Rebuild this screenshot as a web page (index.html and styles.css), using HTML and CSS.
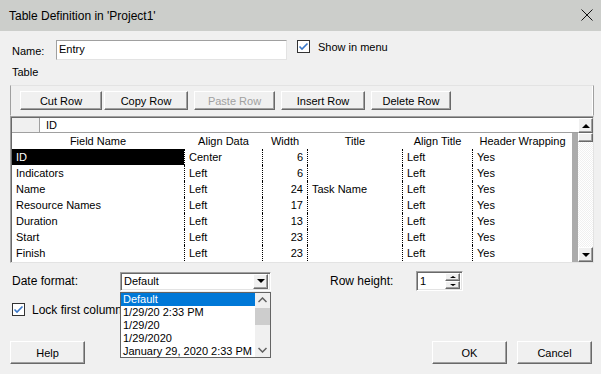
FILE: index.html
```html
<!DOCTYPE html>
<html>
<head>
<meta charset="utf-8">
<link rel="stylesheet" href="styles.css">
</head>
<body>
<div class="window">
  <div class="titlebar">
    <span class="title">Table Definition in 'Project1'</span>
    <svg class="close" width="12" height="12" viewBox="0 0 12 12"><path d="M0.5 0.5 L11.5 11.5 M11.5 0.5 L0.5 11.5" stroke="#111" stroke-width="1" fill="none"/></svg>
  </div>
  <div class="content">
    <div class="name-row">
      <span class="name-label">Name:</span>
      <div class="textbox">Entry</div>
      <div class="check-group show-menu">
        <span class="checkbox"><svg width="11" height="11" viewBox="0 0 11 11"><path d="M1.5 5.5 L4 8 L9.5 2.5" stroke="#3a78c9" stroke-width="1.6" fill="none"/></svg></span>
        <span>Show in menu</span>
      </div>
    </div>
    <div class="section-label">Table</div>
    <div class="panel">
      <button class="btn b-cut">Cut Row</button>
      <button class="btn b-copy">Copy Row</button>
      <button class="btn b-paste disabled">Paste Row</button>
      <button class="btn b-insert">Insert Row</button>
      <button class="btn b-delete">Delete Row</button>
    </div>
    <div class="grid">
      <div class="grid-main">
        <div class="editbar"><div class="corner"></div><div class="editval">ID</div></div>
        <div class="rows">
          <div class="row head">
            <div class="c c1">Field Name</div><div class="c c2">Align Data</div><div class="c c3">Width</div><div class="c c4">Title</div><div class="c c5">Align Title</div><div class="c c6">Header Wrapping</div>
          </div>
          <div class="row">
            <div class="c c1 sel"><span>ID</span></div><div class="c c2">Center</div><div class="c c3">6</div><div class="c c4"></div><div class="c c5">Left</div><div class="c c6">Yes</div>
          </div>
          <div class="row">
            <div class="c c1">Indicators</div><div class="c c2">Left</div><div class="c c3">6</div><div class="c c4"></div><div class="c c5">Left</div><div class="c c6">Yes</div>
          </div>
          <div class="row">
            <div class="c c1">Name</div><div class="c c2">Left</div><div class="c c3">24</div><div class="c c4">Task Name</div><div class="c c5">Left</div><div class="c c6">Yes</div>
          </div>
          <div class="row">
            <div class="c c1">Resource Names</div><div class="c c2">Left</div><div class="c c3">17</div><div class="c c4"></div><div class="c c5">Left</div><div class="c c6">Yes</div>
          </div>
          <div class="row">
            <div class="c c1">Duration</div><div class="c c2">Left</div><div class="c c3">13</div><div class="c c4"></div><div class="c c5">Left</div><div class="c c6">Yes</div>
          </div>
          <div class="row">
            <div class="c c1">Start</div><div class="c c2">Left</div><div class="c c3">23</div><div class="c c4"></div><div class="c c5">Left</div><div class="c c6">Yes</div>
          </div>
          <div class="row">
            <div class="c c1">Finish</div><div class="c c2">Left</div><div class="c c3">23</div><div class="c c4"></div><div class="c c5">Left</div><div class="c c6">Yes</div>
          </div>
        </div>
      </div>
      <div class="vscroll">
        <div class="sbtn"><span class="tri-up"></span></div>
        <div class="thumb"></div>
        <div class="track"></div>
        <div class="sbtn"><span class="tri-down"></span></div>
      </div>
    </div>
    <div class="opt-row">
      <span class="date-label">Date format:</span>
      <div class="combo">
        <span class="combo-val">Default</span>
        <div class="combo-btn"><span class="tri-down"></span></div>
      </div>
      <span class="rh-label">Row height:</span>
      <div class="spin">
        <span class="spin-val">1</span>
        <div class="spin-btns">
          <div class="spin-btn"><span class="tri-up small"></span></div>
          <div class="spin-btn"><span class="tri-down small"></span></div>
        </div>
      </div>
    </div>
    <div class="lock-row">
      <span class="checkbox"><svg width="11" height="11" viewBox="0 0 11 11"><path d="M1.5 5.5 L4 8 L9.5 2.5" stroke="#3a78c9" stroke-width="1.6" fill="none"/></svg></span>
      <span class="lock-label">Lock first column</span>
    </div>
    <div class="footer">
      <button class="btn fbtn">Help</button>
      <span class="spacer"></span>
      <button class="btn fbtn">OK</button>
      <button class="btn fbtn">Cancel</button>
    </div>
    <div class="dropdown">
      <div class="items">
        <div class="item hl">Default</div>
        <div class="item">1/29/20 2:33 PM</div>
        <div class="item">1/29/20</div>
        <div class="item">1/29/2020</div>
        <div class="item">January 29, 2020 2:33 PM</div>
      </div>
      <div class="lscroll">
        <svg class="chev" width="9" height="6" viewBox="0 0 9 6"><path d="M0.5 5 L4.5 1 L8.5 5" stroke="#606060" stroke-width="1.5" fill="none"/></svg>
        <div class="lthumb"></div>
        <span class="lfill"></span>
        <svg class="chev" width="9" height="6" viewBox="0 0 9 6"><path d="M0.5 1 L4.5 5 L8.5 1" stroke="#606060" stroke-width="1.5" fill="none"/></svg>
      </div>
    </div>
  </div>
</div>
</body>
</html>
```
FILE: styles.css
```css
* { box-sizing: border-box; }
html, body { margin: 0; padding: 0; }
body {
  width: 601px;
  height: 374px;
  overflow: hidden;
  font-family: "Liberation Sans", Arial, sans-serif;
  font-size: 11px;
  color: #000;
  background: #f0f0f0;
}
.window { width: 601px; height: 374px; background: #f0f0f0; }
.titlebar {
  height: 31px;
  background: #cccecb;
  display: flex;
  align-items: center;
  padding-left: 9px;
  padding-right: 8px;
  justify-content: space-between;
}
.title { font-size: 12px; color: #000; }
.close { margin-top: -1px; }
.content { position: relative; padding-top: 9px; }

.name-row {
  display: flex;
  align-items: flex-start;
  height: 20px;
}
.name-label { margin-left: 12px; width: 44px; line-height: 20px; padding-top: 1px; }
.textbox {
  width: 231px;
  height: 20px;
  background: #fff;
  border: 1px solid;
  border-color: #a0a0a0 #e3e3e3 #e3e3e3 #a0a0a0;
  padding-left: 2px;
  line-height: 17px;
}
.check-group { display: flex; align-items: center; height: 13px; }
.show-menu { margin-left: 10px; }
.checkbox {
  width: 13px;
  height: 13px;
  border: 1px solid #333;
  background: #fff;
  display: inline-flex;
  align-items: center;
  justify-content: center;
  flex: none;
}
.show-menu .checkbox { margin-right: 8px; }
.section-label { margin-left: 12px; margin-top: 6px; line-height: 13px; height: 13px; }

.panel {
  margin-left: 10px;
  margin-top: 6px;
  width: 584px;
  height: 31px;
  border: 1px solid;
  border-color: #e3e3e3 #a0a0a0 transparent #a0a0a0;
  box-shadow: inset -1px 0 #fff;
  display: flex;
  align-items: flex-start;
  padding-top: 5px;
  padding-left: 9px;
}
.btn {
  font-family: "Liberation Sans", Arial, sans-serif;
  font-size: 11px;
  color: #000;
  background: #f0f0f0;
  border: 1px solid;
  border-color: #fff #696969 #696969 #fff;
  box-shadow: inset -1px -1px #a0a0a0;
  padding: 0;
  margin: 0;
  height: 19px;
}
.btn.disabled { color: #a0a0a0; }
.b-cut { width: 82px; }
.b-copy { width: 84px; margin-left: 2px; }
.b-paste { width: 81px; margin-left: 6px; }
.b-insert { width: 84px; margin-left: 6px; }
.b-delete { width: 80px; margin-left: 6px; }

.grid {
  margin-left: 10px;
  width: 584px;
  height: 147px;
  border: 1px solid;
  border-color: #a0a0a0 #e3e3e3 #e3e3e3 #a0a0a0;
  box-shadow: inset 1px 1px #696969;
  padding: 1px 0 0 1px;
  display: flex;
  background: #fff;
}
.grid-main { width: 566px; display: flex; flex-direction: column; overflow: hidden; }
.editbar {
  height: 15px;
  display: flex;
  border-bottom: 1px solid #a0a0a0;
  background: #fff;
  flex: none;
}
.corner { width: 28px; background: #f0f0f0; border-right: 1px solid #a0a0a0; }
.editval { padding-left: 6px; line-height: 14px; }
.rows {
  flex: 1;
  background: linear-gradient(to right, #fff 560px, #ababab 560px);
  overflow: hidden;
}
.row { display: flex; height: 16px; line-height: 16px; }
.c { flex: none; white-space: nowrap; overflow: hidden; background: #fff; padding-left: 4px; }
.row .c1 { width: 173px; border-right: 1px dotted #000; }
.row .c2 { width: 78px; border-right: 1px dotted #000; }
.row .c3 { width: 45px; border-right: 1px dotted #000; text-align: right; padding-left: 0; padding-right: 4px; }
.row .c4 { width: 95px; border-right: 1px dotted #000; }
.row .c5 { width: 70px; border-right: 1px dotted #000; }
.row .c6 { width: 99px; }
.row.head .c { border-right-color: transparent; text-align: center; padding: 0; }
.c1.sel { padding-left: 0; }
.c1.sel span { display: block; width: 172px; height: 16px; background: #000; color: #fff; padding-left: 4px; }

.vscroll {
  width: 15px;
  display: flex;
  flex-direction: column;
  background: repeating-conic-gradient(#fff 0 25%, #f0f0f0 0 50%) 0 0 / 2px 2px;
}
.sbtn {
  height: 15px;
  background: #f0f0f0;
  border: 1px solid;
  border-color: #fff #696969 #696969 #fff;
  box-shadow: inset -1px -1px #a0a0a0;
  display: flex;
  align-items: center;
  justify-content: center;
  flex: none;
}
.thumb {
  height: 9px;
  background: #f0f0f0;
  border: 1px solid;
  border-color: #fff #696969 #696969 #fff;
  box-shadow: inset -1px -1px #a0a0a0;
  flex: none;
}
.track { flex: 1; }
.tri-up, .tri-down { width: 0; height: 0; border-left: 4px solid transparent; border-right: 4px solid transparent; }
.tri-up { border-bottom: 4px solid #000; }
.tri-down { border-top: 4px solid #000; }
.tri-up.small { border-left-width: 3px; border-right-width: 3px; border-bottom-width: 2px; }
.tri-down.small { border-left-width: 3px; border-right-width: 3px; border-top-width: 2px; }

.opt-row {
  display: flex;
  align-items: center;
  margin-top: 8px;
  height: 20px;
  font-size: 12px;
}
.date-label { margin-left: 12px; width: 108px; }
.combo {
  width: 151px;
  height: 19px;
  background: #fff;
  border: 1px solid;
  border-color: #a0a0a0 #fff #fff #a0a0a0;
  box-shadow: inset 1px 1px #696969, inset -1px -1px #e3e3e3;
  display: flex;
  align-items: center;
  padding: 1px 2px 1px 3px;
  font-size: 11px;
}
.combo-val { flex: 1; }
.combo-btn {
  width: 15px;
  height: 15px;
  background: #f0f0f0;
  border: 1px solid;
  border-color: #fff #696969 #696969 #fff;
  box-shadow: inset -1px -1px #a0a0a0;
  display: flex;
  align-items: center;
  justify-content: center;
}
.rh-label { margin-left: 59px; width: 86px; }
.spin {
  width: 47px;
  height: 20px;
  background: #fff;
  border: 1px solid;
  border-color: #a0a0a0 #fff #fff #a0a0a0;
  box-shadow: inset 1px 1px #696969, inset -1px -1px #e3e3e3;
  display: flex;
  padding: 1px 2px 1px 3px;
  font-size: 11px;
}
.spin-val { flex: 1; line-height: 17px; }
.spin-btns { width: 15px; display: flex; flex-direction: column; }
.spin-btn {
  flex: 1;
  background: #f0f0f0;
  border: 1px solid;
  border-color: #fff #696969 #696969 #fff;
  box-shadow: inset -1px -1px #a0a0a0;
  display: flex;
  align-items: center;
  justify-content: center;
}

.lock-row {
  display: flex;
  align-items: center;
  margin-top: 12px;
  margin-left: 12px;
  height: 13px;
  font-size: 12px;
  white-space: nowrap;
}
.lock-row .checkbox { margin-right: 7px; }

.footer {
  display: flex;
  margin-top: 25px;
  margin-left: 10px;
  margin-right: 9px;
}
.fbtn { width: 75px; height: 23px; }
.spacer { flex: 1; }
.footer .fbtn + .fbtn { margin-left: 10px; }

.dropdown {
  position: absolute;
  left: 120px;
  top: 261px;
  width: 151px;
  height: 66px;
  background: #fff;
  border: 1px solid #646464;
  display: flex;
  font-size: 11px;
}
.items { flex: 1; }
.item { height: 13px; line-height: 13px; padding-left: 2px; white-space: nowrap; overflow: hidden; }
.item.hl { background: #0078d7; color: #fff; }
.lscroll {
  width: 15px;
  background: #f0f0f0;
  display: flex;
  flex-direction: column;
  align-items: center;
  padding-top: 4px;
  padding-bottom: 4px;
}
.lthumb { width: 15px; height: 17px; background: #cdcdcd; margin-top: 5px; }
.lfill { flex: 1; }
```
